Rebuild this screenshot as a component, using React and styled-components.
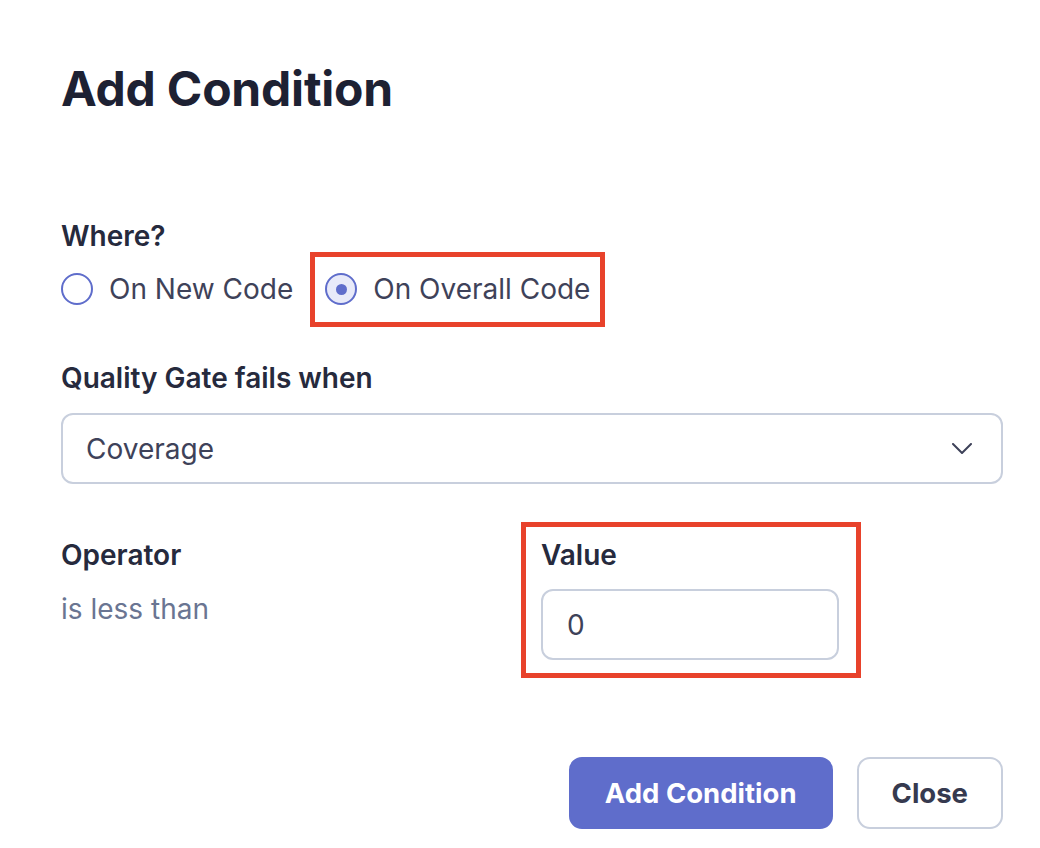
import React from "react";
import styled, { createGlobalStyle } from "styled-components";

const GlobalStyle = createGlobalStyle`
  html, body {
    margin: 0;
    padding: 0;
    background: #ffffff;
  }
  body {
    font-family: Inter, "Noto Sans", "Liberation Sans", sans-serif;
    -webkit-font-smoothing: antialiased;
  }
  * { box-sizing: border-box; }
`;

const Dialog = styled.div`
  width: 1040px;
  padding: 60px 37px 0 61px;
  display: flex;
  flex-direction: column;
`;

const Title = styled.h1`
  margin: 0;
  font-size: 48px;
  line-height: 58px;
  font-weight: 700;
  color: #1d2133;
  letter-spacing: -0.2px;
`;

const Field = styled.div`
  display: flex;
  flex-direction: column;
  margin-top: ${(p) => p.$top || 0}px;
`;

const Label = styled.div`
  font-size: 28px;
  line-height: 34px;
  font-weight: 600;
  color: #262a3d;
`;

const RadioRow = styled.div`
  display: flex;
  align-items: center;
  gap: 32px;
  height: 72px;
`;

const RadioOption = styled.label`
  position: relative;
  display: flex;
  align-items: center;
  gap: 16px;
  height: 72px;
  font-size: 28px;
  color: #3e4259;
  cursor: pointer;

  ${(p) =>
    p.$highlight &&
    `
    &::after {
      content: "";
      position: absolute;
      top: -1px;
      bottom: -2px;
      left: -15px;
      right: -15px;
      border: 5px solid #e8422b;
      pointer-events: none;
    }
  `}
`;

const RadioCircle = styled.span`
  width: 32px;
  height: 32px;
  border-radius: 50%;
  border: 2px solid #5f6dcb;
  background: ${(p) => (p.$checked ? "#e8eaf9" : "#ffffff")};
  display: flex;
  align-items: center;
  justify-content: center;
  flex-shrink: 0;

  &::before {
    content: "";
    width: 11px;
    height: 11px;
    border-radius: 50%;
    background: ${(p) => (p.$checked ? "#5f6dcb" : "transparent")};
  }
`;

const Select = styled.div`
  margin-top: 18px;
  height: 71px;
  border: 2px solid #c8cfdd;
  border-radius: 12px;
  padding: 0 29px 0 23px;
  display: flex;
  align-items: center;
  justify-content: space-between;
  font-size: 28px;
  color: #3e4259;
`;

const Columns = styled.div`
  margin-top: 54px;
  display: grid;
  grid-template-columns: 1fr 1fr;
  column-gap: 18px;
`;

const Column = styled.div`
  position: relative;
  display: flex;
  flex-direction: column;
  align-items: flex-start;
  justify-self: start;

  ${(p) =>
    p.$highlight &&
    `
    &::after {
      content: "";
      position: absolute;
      top: -16px;
      bottom: -18px;
      left: -20px;
      right: -22px;
      border: 5px solid #e8422b;
      pointer-events: none;
    }
  `}
`;

const StaticValue = styled.div`
  margin-top: 19px;
  font-size: 28px;
  line-height: 36px;
  color: #6a7592;
`;

const Input = styled.div`
  margin-top: 17px;
  width: 298px;
  height: 71px;
  border: 2px solid #c8cfdd;
  border-radius: 12px;
  padding: 0 24px;
  display: flex;
  align-items: center;
  font-size: 28px;
  color: #3e4259;
`;

const Footer = styled.div`
  margin-top: 97px;
  display: flex;
  justify-content: flex-end;
  gap: 24px;
`;

const Button = styled.button`
  height: 72px;
  padding: 0 ${(p) => (p.$primary ? 34 : 33)}px;
  border-radius: 13px;
  font-family: inherit;
  font-size: 27.5px;
  font-weight: 700;
  border: 2px solid ${(p) => (p.$primary ? "#5f6dcb" : "#c8cfdd")};
  background: ${(p) => (p.$primary ? "#5f6dcb" : "#ffffff")};
  color: ${(p) => (p.$primary ? "#ffffff" : "#363a4f")};
  cursor: pointer;
`;

const Chevron = () => (
  <svg width="20" height="11" viewBox="0 0 20 11" fill="none">
    <path d="M1 1 L10 10 L19 1" stroke="#3e4259" strokeWidth="2" strokeLinecap="round" strokeLinejoin="round" />
  </svg>
);

export default function App() {
  return (
    <>
      <GlobalStyle />
      <Dialog>
        <Title>Add Condition</Title>

        <Field $top={101}>
          <Label>Where?</Label>
          <RadioRow>
            <RadioOption>
              <RadioCircle />
              On New Code
            </RadioOption>
            <RadioOption $highlight>
              <RadioCircle $checked />
              On Overall Code
            </RadioOption>
          </RadioRow>
        </Field>

        <Field $top={36}>
          <Label>Quality Gate fails when</Label>
          <Select>
            <span>Coverage</span>
            <Chevron />
          </Select>
        </Field>

        <Columns>
          <Column>
            <Label>Operator</Label>
            <StaticValue>is less than</StaticValue>
          </Column>
          <Column $highlight>
            <Label>Value</Label>
            <Input>0</Input>
          </Column>
        </Columns>

        <Footer>
          <Button $primary>Add Condition</Button>
          <Button>Close</Button>
        </Footer>
      </Dialog>
    </>
  );
}
